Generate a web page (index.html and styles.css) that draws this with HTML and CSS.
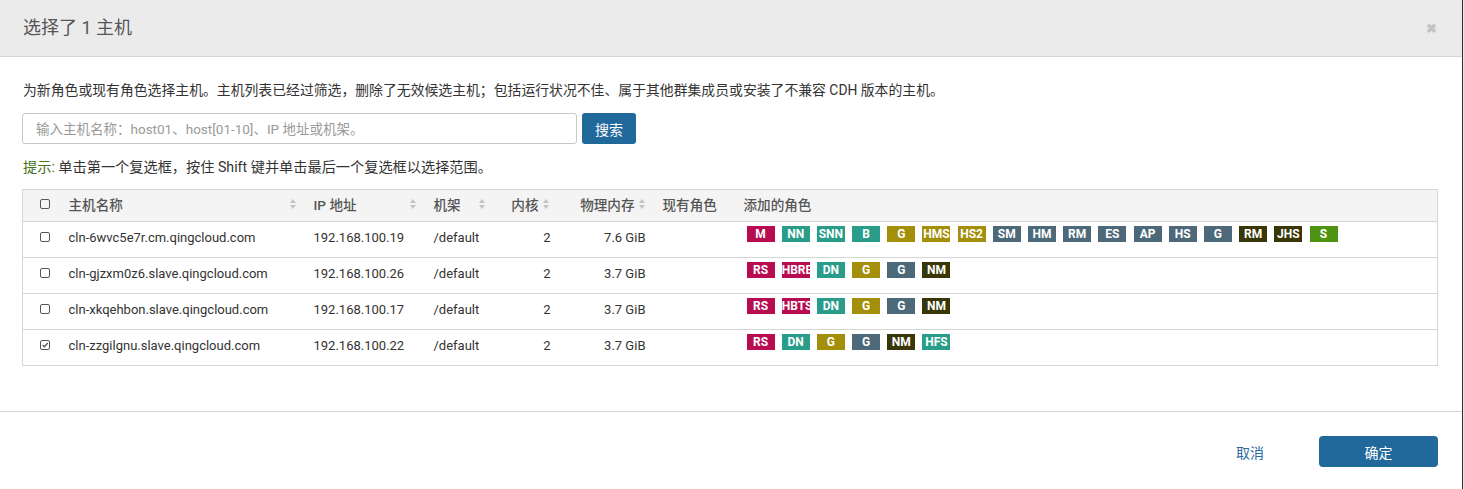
FILE: index.html
```html
<!DOCTYPE html>
<html lang="zh-CN">
<head>
<meta charset="utf-8">
<title>选择主机</title>
<link rel="stylesheet" href="styles.css">
</head>
<body>
<div class="modal">
  <div class="modal-header">
    <h3 class="modal-title">选择了 1 主机</h3>
    <span class="close">&#x2716;</span>
  </div>
  <div class="modal-body">
    <p class="intro">为新角色或现有角色选择主机。主机列表已经过筛选，删除了无效候选主机；包括运行状况不佳、属于其他群集成员或安装了不兼容 CDH 版本的主机。</p>
    <div class="search">
      <input class="search-input" type="text" placeholder="输入主机名称：host01、host[01-10]、IP 地址或机架。">
      <button class="btn btn-primary search-btn">搜索</button>
    </div>
    <p class="hint"><span class="hint-label">提示:</span> 单击第一个复选框，按住 Shift 键并单击最后一个复选框以选择范围。</p>
    <table class="hosts">
      <colgroup>
        <col class="c-check"><col class="c-name"><col class="c-ip"><col class="c-rack"><col class="c-core"><col class="c-mem"><col class="c-roles"><col>
      </colgroup>
      <thead>
        <tr>
          <th class="cell-check"><span class="cb"></span></th>
          <th><div class="th-sort"><span>主机名称</span><svg class="sort" viewBox="0 0 6 10"><path d="M0 4 L3 0 L6 4Z M0 6 L3 10 L6 6Z"/></svg></div></th>
          <th><div class="th-sort"><span>IP 地址</span><svg class="sort" viewBox="0 0 6 10"><path d="M0 4 L3 0 L6 4Z M0 6 L3 10 L6 6Z"/></svg></div></th>
          <th><div class="th-sort"><span>机架</span><svg class="sort" viewBox="0 0 6 10"><path d="M0 4 L3 0 L6 4Z M0 6 L3 10 L6 6Z"/></svg></div></th>
          <th class="num"><div class="th-sort-r"><span>内核</span><svg class="sort" viewBox="0 0 6 10"><path d="M0 4 L3 0 L6 4Z M0 6 L3 10 L6 6Z"/></svg></div></th>
          <th class="num"><div class="th-sort-r"><span>物理内存</span><svg class="sort" viewBox="0 0 6 10"><path d="M0 4 L3 0 L6 4Z M0 6 L3 10 L6 6Z"/></svg></div></th>
          <th>现有角色</th>
          <th>添加的角色</th>
        </tr>
      </thead>
      <tbody>
        <tr>
          <td class="cell-check"><span class="cb"></span></td>
          <td>cln-6wvc5e7r.cm.qingcloud.com</td>
          <td>192.168.100.19</td>
          <td>/default</td>
          <td class="num core">2</td>
          <td class="num mem">7.6 GiB</td>
          <td></td>
          <td class="roles"><div class="badges">
            <span class="b b-red">M</span><span class="b b-teal">NN</span><span class="b b-teal">SNN</span><span class="b b-teal">B</span><span class="b b-olive">G</span><span class="b b-olive">HMS</span><span class="b b-olive">HS2</span><span class="b b-slate">SM</span><span class="b b-slate">HM</span><span class="b b-slate">RM</span><span class="b b-slate">ES</span><span class="b b-slate">AP</span><span class="b b-slate">HS</span><span class="b b-slate">G</span><span class="b b-dark">RM</span><span class="b b-dark">JHS</span><span class="b b-green">S</span>
          </div></td>
        </tr>
        <tr>
          <td class="cell-check"><span class="cb"></span></td>
          <td>cln-gjzxm0z6.slave.qingcloud.com</td>
          <td>192.168.100.26</td>
          <td>/default</td>
          <td class="num core">2</td>
          <td class="num mem">3.7 GiB</td>
          <td></td>
          <td class="roles"><div class="badges">
            <span class="b b-red">RS</span><span class="b b-red">HBRE</span><span class="b b-teal">DN</span><span class="b b-olive">G</span><span class="b b-slate">G</span><span class="b b-dark">NM</span>
          </div></td>
        </tr>
        <tr>
          <td class="cell-check"><span class="cb"></span></td>
          <td>cln-xkqehbon.slave.qingcloud.com</td>
          <td>192.168.100.17</td>
          <td>/default</td>
          <td class="num core">2</td>
          <td class="num mem">3.7 GiB</td>
          <td></td>
          <td class="roles"><div class="badges">
            <span class="b b-red">RS</span><span class="b b-red">HBTS</span><span class="b b-teal">DN</span><span class="b b-olive">G</span><span class="b b-slate">G</span><span class="b b-dark">NM</span>
          </div></td>
        </tr>
        <tr>
          <td class="cell-check"><span class="cb checked"><svg viewBox="0 0 10 10"><path d="M2 5 L4.2 7.2 L8.5 2.5"/></svg></span></td>
          <td>cln-zzgilgnu.slave.qingcloud.com</td>
          <td>192.168.100.22</td>
          <td>/default</td>
          <td class="num core">2</td>
          <td class="num mem">3.7 GiB</td>
          <td></td>
          <td class="roles"><div class="badges">
            <span class="b b-red">RS</span><span class="b b-teal">DN</span><span class="b b-olive">G</span><span class="b b-slate">G</span><span class="b b-dark">NM</span><span class="b b-teal">HFS</span>
          </div></td>
        </tr>
      </tbody>
    </table>
  </div>
  <div class="modal-footer">
    <button class="btn btn-link">取消</button>
    <button class="btn btn-primary ok-btn">确定</button>
  </div>
</div>
</body>
</html>
```

FILE: styles.css
```css
* { box-sizing: border-box; }
html, body { margin: 0; padding: 0; }
body {
  background: #e9e9e9;
  font-family: Roboto, "Noto Sans CJK SC", sans-serif;
  color: #333;
  font-size: 14px;
}
.modal {
  width: 1463px;
  height: 489px;
  background: #fff;
  border-right: 1px solid #2e2e2e;
  overflow: hidden;
}
.modal-header {
  height: 57px;
  background: #ecebeb;
  border-bottom: 1px solid #d6d6d6;
  display: flex;
  align-items: center;
  justify-content: space-between;
  padding: 0 25px 0 23px;
}
.modal-title {
  margin: 0;
  font-size: 18px;
  font-weight: normal;
  color: #555;
  line-height: 24px;
}
.close {
  font-size: 13px;
  font-weight: bold;
  color: #c4c4c4;
  line-height: 14px;
  padding-top: 2px;
}
.modal-body {
  padding: 23px 24px 45px 22px;
}
.intro {
  margin: 0 0 13px 1px;
  line-height: 20px;
  font-size: 13.85px;
}
.search {
  display: flex;
  gap: 5px;
}
.search-input {
  width: 555px;
  height: 31px;
  border: 1px solid #c8c8c8;
  border-radius: 3px;
  padding: 0 13px;
  font-family: inherit;
  font-size: 13.5px;
  color: #333;
}
.search-input::placeholder { color: #9a9a9a; }
.btn {
  font-family: inherit;
  font-size: 14px;
  border: none;
  cursor: pointer;
}
.btn-primary {
  background: #22699b;
  color: #fff;
  border-radius: 3px;
}
.search-btn {
  width: 54px;
  height: 31px;
}
.hint {
  margin: 13px 0 12px 1px;
  line-height: 20px;
  font-size: 14.2px;
}
.hint-label { color: #467318; }
.hosts {
  width: 100%;
  border-collapse: collapse;
  table-layout: fixed;
  border: 1px solid #d6d6d6;
  font-size: 13px;
}
.c-check { width: 36px; }
.c-name { width: 245px; }
.c-ip { width: 120px; }
.c-rack { width: 69px; }
.c-core { width: 64px; }
.c-mem { width: 96px; }
.c-roles { width: 81px; }
.hosts th {
  background: #f4f4f4;
  height: 32px;
  text-align: left;
  font-weight: 500;
  color: #555;
  font-size: 13.6px;
  padding: 0 8px 3px 10px;
  border-bottom: 1px solid #d6d6d6;
  white-space: nowrap;
}
.hosts td {
  height: 36px;
  padding: 0 10px 5px;
  border-top: 1px solid #d6d6d6;
  white-space: nowrap;
  color: #333;
}
.hosts th.cell-check { padding: 0 0 3px 17px; }
.hosts td.cell-check { padding: 0 0 5px 17px; }
.th-sort {
  display: flex;
  align-items: center;
  justify-content: space-between;
}
.th-sort-r {
  display: flex;
  align-items: center;
  justify-content: flex-end;
  gap: 4px;
}
.sort {
  width: 6px;
  height: 10px;
  fill: #c0c3c8;
}
.hosts th.num { padding-right: 8px; }
.hosts td.num { text-align: right; }
.hosts td.core { padding-right: 6px; }
.hosts td.mem { padding-right: 7px; }
.cb {
  display: block;
  width: 10px;
  height: 10px;
  border: 1px solid #555;
  border-radius: 2px;
  position: relative;
}
.cb svg {
  display: block;
  width: 8px;
  height: 8px;
  fill: none;
  stroke: #555;
  stroke-width: 1.6;
}
.hosts td.roles {
  vertical-align: top;
  padding: 4px 10px 0 13px;
}
.badges {
  display: flex;
  gap: 7.2px;
}
.b {
  flex: none;
  display: block;
  width: 28px;
  height: 16px;
  overflow: hidden;
  color: #fff;
  font-weight: bold;
  font-size: 12px;
  line-height: 16px;
  text-align: center;
  white-space: nowrap;
}
.b-red { background: #b80c50; }
.b-teal { background: #2a9d8a; }
.b-olive { background: #a38f0a; }
.b-slate { background: #4d6878; }
.b-dark { background: #393708; }
.b-green { background: #4f9312; }
.modal-footer {
  border-top: 1px solid #d6d6d6;
  padding: 24px 24px 0 0;
  display: flex;
  justify-content: flex-end;
  align-items: center;
  gap: 55px;
}
.btn-link {
  background: none;
  color: #2a6a9c;
  padding: 0;
  height: 31px;
}
.ok-btn {
  width: 119px;
  height: 31px;
  border-radius: 4px;
}
```
